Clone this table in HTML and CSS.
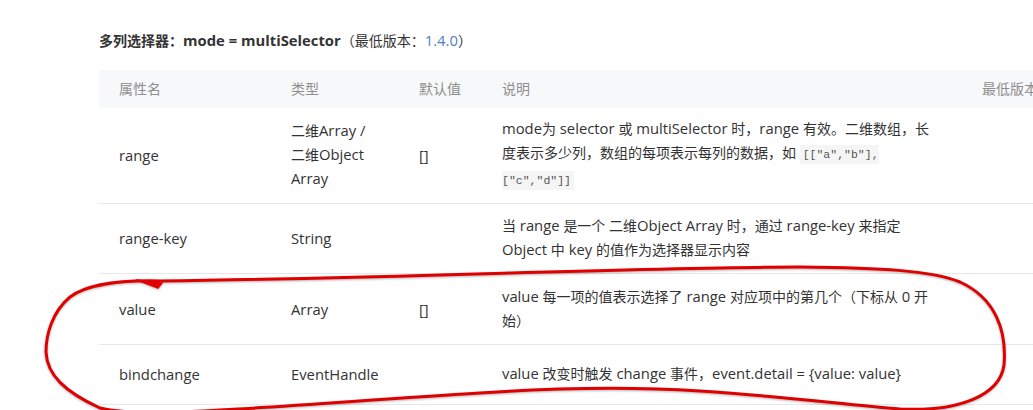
FILE: index.html
```html
<!DOCTYPE html>
<html lang="zh-CN">
<head>
<meta charset="utf-8">
<title>picker multiSelector</title>
<link rel="stylesheet" href="styles.css">
</head>
<body>
<div class="page">
  <h4 class="title"><strong>多列选择器：<span class="en">mode = multiSelector</span></strong>（最低版本：<a class="ver en">1.4.0</a>）</h4>
  <table class="props">
    <thead>
      <tr class="head">
        <th class="c1">属性名</th>
        <th class="c2">类型</th>
        <th class="c3">默认值</th>
        <th class="c4">说明</th>
        <th class="c5">最低版本</th>
      </tr>
    </thead>
    <tbody>
      <tr class="r1">
        <td class="lat">range</td>
        <td>二维<span class="en">Array /</span><br>二维<span class="en">Object</span><br><span class="en">Array</span></td>
        <td class="lat">[]</td>
        <td><span class="en">mode</span>为<span class="en"> selector </span>或<span class="en"> multiSelector </span>时，<span class="en">range </span>有效。二维数组，长度表示多少列，数组的每项表示每列的数据，如 <code>[["a","b"], ["c","d"]]</code></td>
        <td></td>
      </tr>
      <tr class="r2">
        <td class="lat">range-key</td>
        <td class="lat">String</td>
        <td></td>
        <td>当<span class="en"> range </span>是一个 二维<span class="en">Object Array </span>时，通过<span class="en"> range-key </span>来指定<span class="en"> Object </span>中<span class="en"> key </span>的值作为选择器显示内容</td>
        <td></td>
      </tr>
      <tr class="r3">
        <td class="lat">value</td>
        <td class="lat">Array</td>
        <td class="lat">[]</td>
        <td><span class="en">value </span>每一项的值表示选择了<span class="en"> range </span>对应项中的第几个（下标从<span class="en"> 0 </span>开始）</td>
        <td></td>
      </tr>
      <tr class="r4">
        <td class="lat">bindchange</td>
        <td class="lat">EventHandle</td>
        <td></td>
        <td><span class="en">value </span>改变时触发<span class="en"> change </span>事件，<span class="en">event.detail = {value: value}</span></td>
        <td></td>
      </tr>
    </tbody>
  </table>
</div>
<svg class="mark" width="1033" height="410" viewBox="0 0 1033 410" xmlns="http://www.w3.org/2000/svg">
  <path d="M160 281 C120 280 86 285 70 297 C52 312 46 335 46 352 C47 375 65 392 100 408 C140 420 300 404 480 393 C540 389 620 386 700 391 C780 396 840 404 900 409 C960 412 1000 395 1004 365 C1007 330 995 298 960 282 C930 270 880 268 800 267 C650 267 400 278 160 281" fill="none" stroke="#e00000" stroke-width="3" stroke-linecap="round" stroke-linejoin="round"/>
  <path d="M137 280 L162 283 L158 288 Z" fill="#e00000" stroke="#e00000" stroke-width="1.5" stroke-linejoin="round"/>
</svg>
</body>
</html>
```
FILE: styles.css
```css
html, body {
  margin: 0;
  padding: 0;
  background: #fff;
  overflow: hidden;
}
body {
  font-family: "Open Sans", "Noto Sans CJK SC", sans-serif;
  font-size: 14px;
  color: #333;
  width: 1033px;
  height: 410px;
  position: relative;
}
.page {
  padding: 29px 0 0 99px;
}
.title {
  margin: 0 0 17px 0;
  height: 24px;
  font-size: 14px;
  font-weight: normal;
  line-height: 24px;
  color: #333;
  white-space: nowrap;
}
.title strong {
  font-weight: bold;
}
.en {
  font-size: 14.8px;
  line-height: 1;
}
.ver {
  color: #4a7fc0;
  text-decoration: none;
}
.props {
  border-collapse: collapse;
  width: 1100px;
  table-layout: fixed;
}
.props th, .props td {
  padding: 0 20px;
  text-align: left;
  vertical-align: middle;
  line-height: 24px;
  box-sizing: border-box;
}
.props th {
  font-weight: normal;
  color: #8e8e8e;
  background: #f7f8fa;
  height: 38px;
}
.props td {
  border-bottom: 1px solid #e8e8e8;
}
.props td.lat {
  font-size: 14.8px;
}
.c1 { width: 172px; }
.c2 { width: 128px; }
.c3 { width: 83px; }
.c4 { width: 480px; padding-right: 18px !important; }
.c5 { width: 237px; }
.r1 td { height: 95px; }
.r2 td { height: 70px; }
.r3 td { height: 71px; }
.r4 td { height: 60px; }
code {
  font-family: "Liberation Mono", "DejaVu Sans Mono", monospace;
  font-size: 11.5px;
  color: #555;
  background: #f5f5f5;
  padding: 3px 3px;
}
.mark {
  position: absolute;
  left: 0;
  top: 0;
  pointer-events: none;
  filter: drop-shadow(0 1px 1px rgba(0,0,0,0.3));
}
```
